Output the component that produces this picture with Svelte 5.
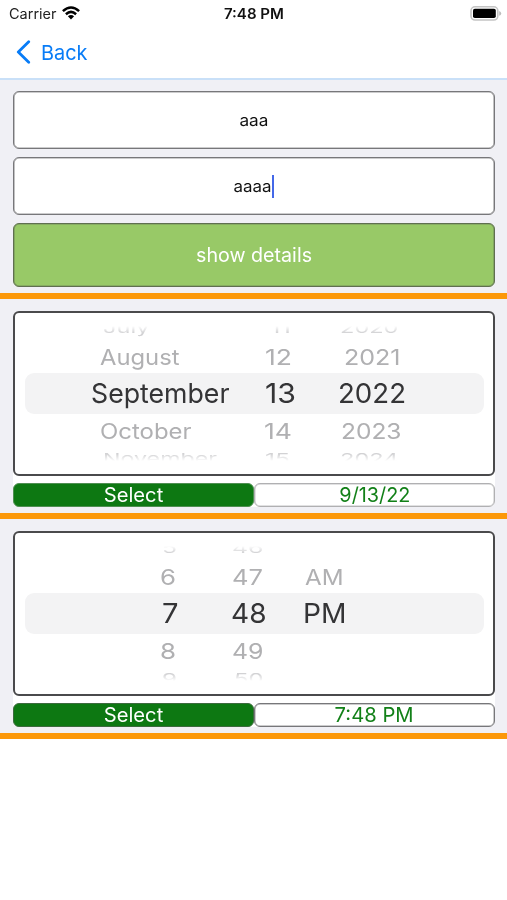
<script>
  const dateRows = [
    { kind: 'far', items: [['July', 103, 46.5], ['11', 270, 21], ['2020', 340, 58.5]] },
    { kind: 'near', items: [['August', 100, 79.5], ['12', 264.5, 27], ['2021', 343.5, 56.5]] },
    { kind: 'mid', items: [['September', 90.5, 138.5], ['13', 264.5, 31], ['2022', 337.5, 68]] },
    { kind: 'near', items: [['October', 100, 91.5], ['14', 263.5, 28], ['2023', 341, 60.5]] },
    { kind: 'far', items: [['November', 103, 114], ['15', 265, 25], ['2024', 340, 58.5]] }
  ];
  const timeRows = [
    { kind: 'far', items: [['5', 162, 15], ['46', 232, 31.5]] },
    { kind: 'near', items: [['6', 160, 16], ['47', 232, 31], ['AM', 304.8, 38.5]] },
    { kind: 'mid', items: [['7', 161.5, 16.5], ['48', 230.5, 35.5], ['PM', 302.8, 43.5]] },
    { kind: 'near', items: [['8', 160, 16], ['49', 232, 31.5]] },
    { kind: 'far', items: [['9', 162, 15], ['50', 233.5, 29.5]] }
  ];
  const pickers = [
    { rows: dateRows, value: '9/13/22', width: 71, tone: 'soft' },
    { rows: timeRows, value: '7:48 PM', width: 79, tone: 'firm' }
  ];
  const squash = { far: 0.54, near: 0.78, mid: 1 };

  // Stretches a label horizontally to the given width.
  function fit(node, { w, sy = 1 }) {
    const natural = node.getBoundingClientRect().width;
    node.style.transform = `scale(${w / natural}, ${sy})`;
  }
</script>

<div class="screen">
  <header>
    <div class="status">
      <div class="carrier">
        <span class="t left" use:fit={{ w: 47.5 }}>Carrier</span>
      </div>
      <svg class="wifi" width="18" height="14" viewBox="0 0 18 14">
        <g fill="none" stroke="#000" stroke-width="2.5">
          <path d="M0.9 5.2Q9-2.3 17.1 5.2" />
          <path d="M3.9 8.2Q9 3.6 14.1 8.2" />
        </g>
        <path d="M5.9 10.3Q9 7.7 12.1 10.3L9 13.5Z" />
      </svg>
      <div class="clock"><span class="t" use:fit={{ w: 60 }}>7:48 PM</span></div>
      <svg class="battery" width="32" height="15" viewBox="0 0 32 15">
        <rect x="1" y="0.8" width="26.8" height="13.2" rx="4" fill="#fff" stroke="#c4c4c4" stroke-width="1.6" />
        <rect x="3" y="2.8" width="22.8" height="9.2" rx="1.8" />
        <path d="M29.2 5V9.8Q31.2 9 31.2 7.4T29.2 5Z" fill="#bcbcbc" />
      </svg>
    </div>
    <nav>
      <svg width="15" height="24" viewBox="0 0 15 24">
        <path d="M12.7 1.8L2.3 12L12.7 22.2" fill="none" stroke="#087cf7" stroke-width="2.8" stroke-linecap="round" stroke-linejoin="round" />
      </svg>
      <span class="t left" use:fit={{ w: 46.5 }}>Back</span>
    </nav>
  </header>

  <section class="form">
    <div class="field"><span class="t" use:fit={{ w: 29 }}>aaa</span></div>
    <div class="field second"><span class="t" use:fit={{ w: 38 }}>aaaa</span><i class="caret"></i></div>
    <div class="show"><span class="t" use:fit={{ w: 116 }}>show details</span></div>
  </section>

  {#each pickers as picker}
    <section class="block">
      <div class="card">
        <div class="wheel">
          <div class="drum">
            {#each picker.rows as row}
              <div class="row {row.kind}">
                {#each row.items as [text, x, w]}
                  <div class="cell" style="margin-left: {x - 15}px">
                    <span class="t left" use:fit={{ w, sy: squash[row.kind] }}>{text}</span>
                  </div>
                {/each}
              </div>
            {/each}
          </div>
        </div>
        <div class="actions">
          <div class="select {picker.tone}"><span class="t" use:fit={{ w: 59.5 }}>Select</span></div>
          <div class="value {picker.tone}"><span class="t" use:fit={{ w: picker.width }}>{picker.value}</span></div>
        </div>
      </div>
    </section>
  {/each}
</div>

<style>
  :global(body) { background: #fff; }
  .screen {
    width: 507px;
    height: 900px;
    overflow: hidden;
    background: #fff;
    font-family: Inter, Roboto, "Liberation Sans", sans-serif;
    color: #111;
  }
  .screen * { box-sizing: border-box; }
  .t { display: inline-block; white-space: nowrap; flex: none; }
  .left { transform-origin: left center; }

  header { height: 80px; border-bottom: 2px solid #c9e0f8; }
  .status { display: flex; height: 27px; align-items: center; padding-left: 9px; }
  .carrier { width: 53px; font-size: 14px; color: #222; }
  .wifi { margin-top: -1px; }
  .clock { flex: 1; display: flex; padding-left: 145.5px; font-size: 14px; font-weight: 600; }
  .battery { margin-right: 5px; margin-top: -1px; }
  nav { display: flex; align-items: center; height: 50px; padding-left: 16px; gap: 9.5px; font-size: 20.5px; color: #087cf7; }

  .form {
    height: 219px;
    padding: 11px 12px 0 13px;
    background: #f0f0f5;
    border-bottom: 6px solid #fc9809;
  }
  .field, .show {
    display: flex;
    align-items: center;
    justify-content: center;
    border: 1px solid #77777a;
    box-shadow: inset 0 0 0 0.6px #99999b;
    border-radius: 6px;
  }
  .field { height: 58px; margin-bottom: 8px; background: #fff; font-size: 16.5px; }
  .caret { width: 2px; height: 23px; background: #4468e8; }
  .show { height: 64px; background: #98c967; border-color: #5f6f50; box-shadow: inset 0 0 0 0.6px #76925c; color: #fff; font-size: 20px; }

  .block {
    height: 220px;
    padding: 12px 12px 0 13px;
    background: #f0f0f5;
    border-bottom: 6px solid #fc9809;
  }
  .card { background: #fff; border-radius: 6px; }
  .wheel {
    height: 165px;
    padding: 13px 0;
    border: 2px solid #4a4a4c;
    border-radius: 6px;
  }
  .drum {
    height: 135px;
    display: flex;
    flex-direction: column;
    justify-content: center;
    overflow: hidden;
    mask-image: linear-gradient(transparent, #000 7px, #000 128px, transparent);
  }
  .row {
    display: grid;
    grid-template-columns: 0 0 0;
    flex: none;
    align-items: center;
    font-size: 27.5px;
    line-height: 34px;
  }
  .cell { width: 0; height: 0; display: flex; align-items: center; }
  .mid { height: 41.5px; margin: 0 9px 0 10px; padding-bottom: 1px; background: #f3f3f4; border-radius: 9px; color: #343436; }
  .mid .cell { position: relative; left: -10px; }
  .near { height: 32.5px; color: #b0b0b2; }
  .far { height: 25px; color: #d2d2d4; }

  .actions { display: flex; height: 24px; margin-top: 7px; font-size: 20px; line-height: 24px; }
  .select, .value {
    flex: 1;
    display: flex;
    align-items: center;
    justify-content: center;
    border-radius: 6px;
    border: 1px solid #b0b0b2;
    box-shadow: inset 0 0 0 0.5px #c4c4c6;
  }
  .select { background: #0d7812; color: #fff; border-color: #4f8f52; box-shadow: none; }
  .value { background: #fff; color: #128018; }
  .value.firm { border-color: #77777a; box-shadow: inset 0 0 0 0.5px #99999b; }
  .select.firm { border-color: #3c6a3e; }
</style>
